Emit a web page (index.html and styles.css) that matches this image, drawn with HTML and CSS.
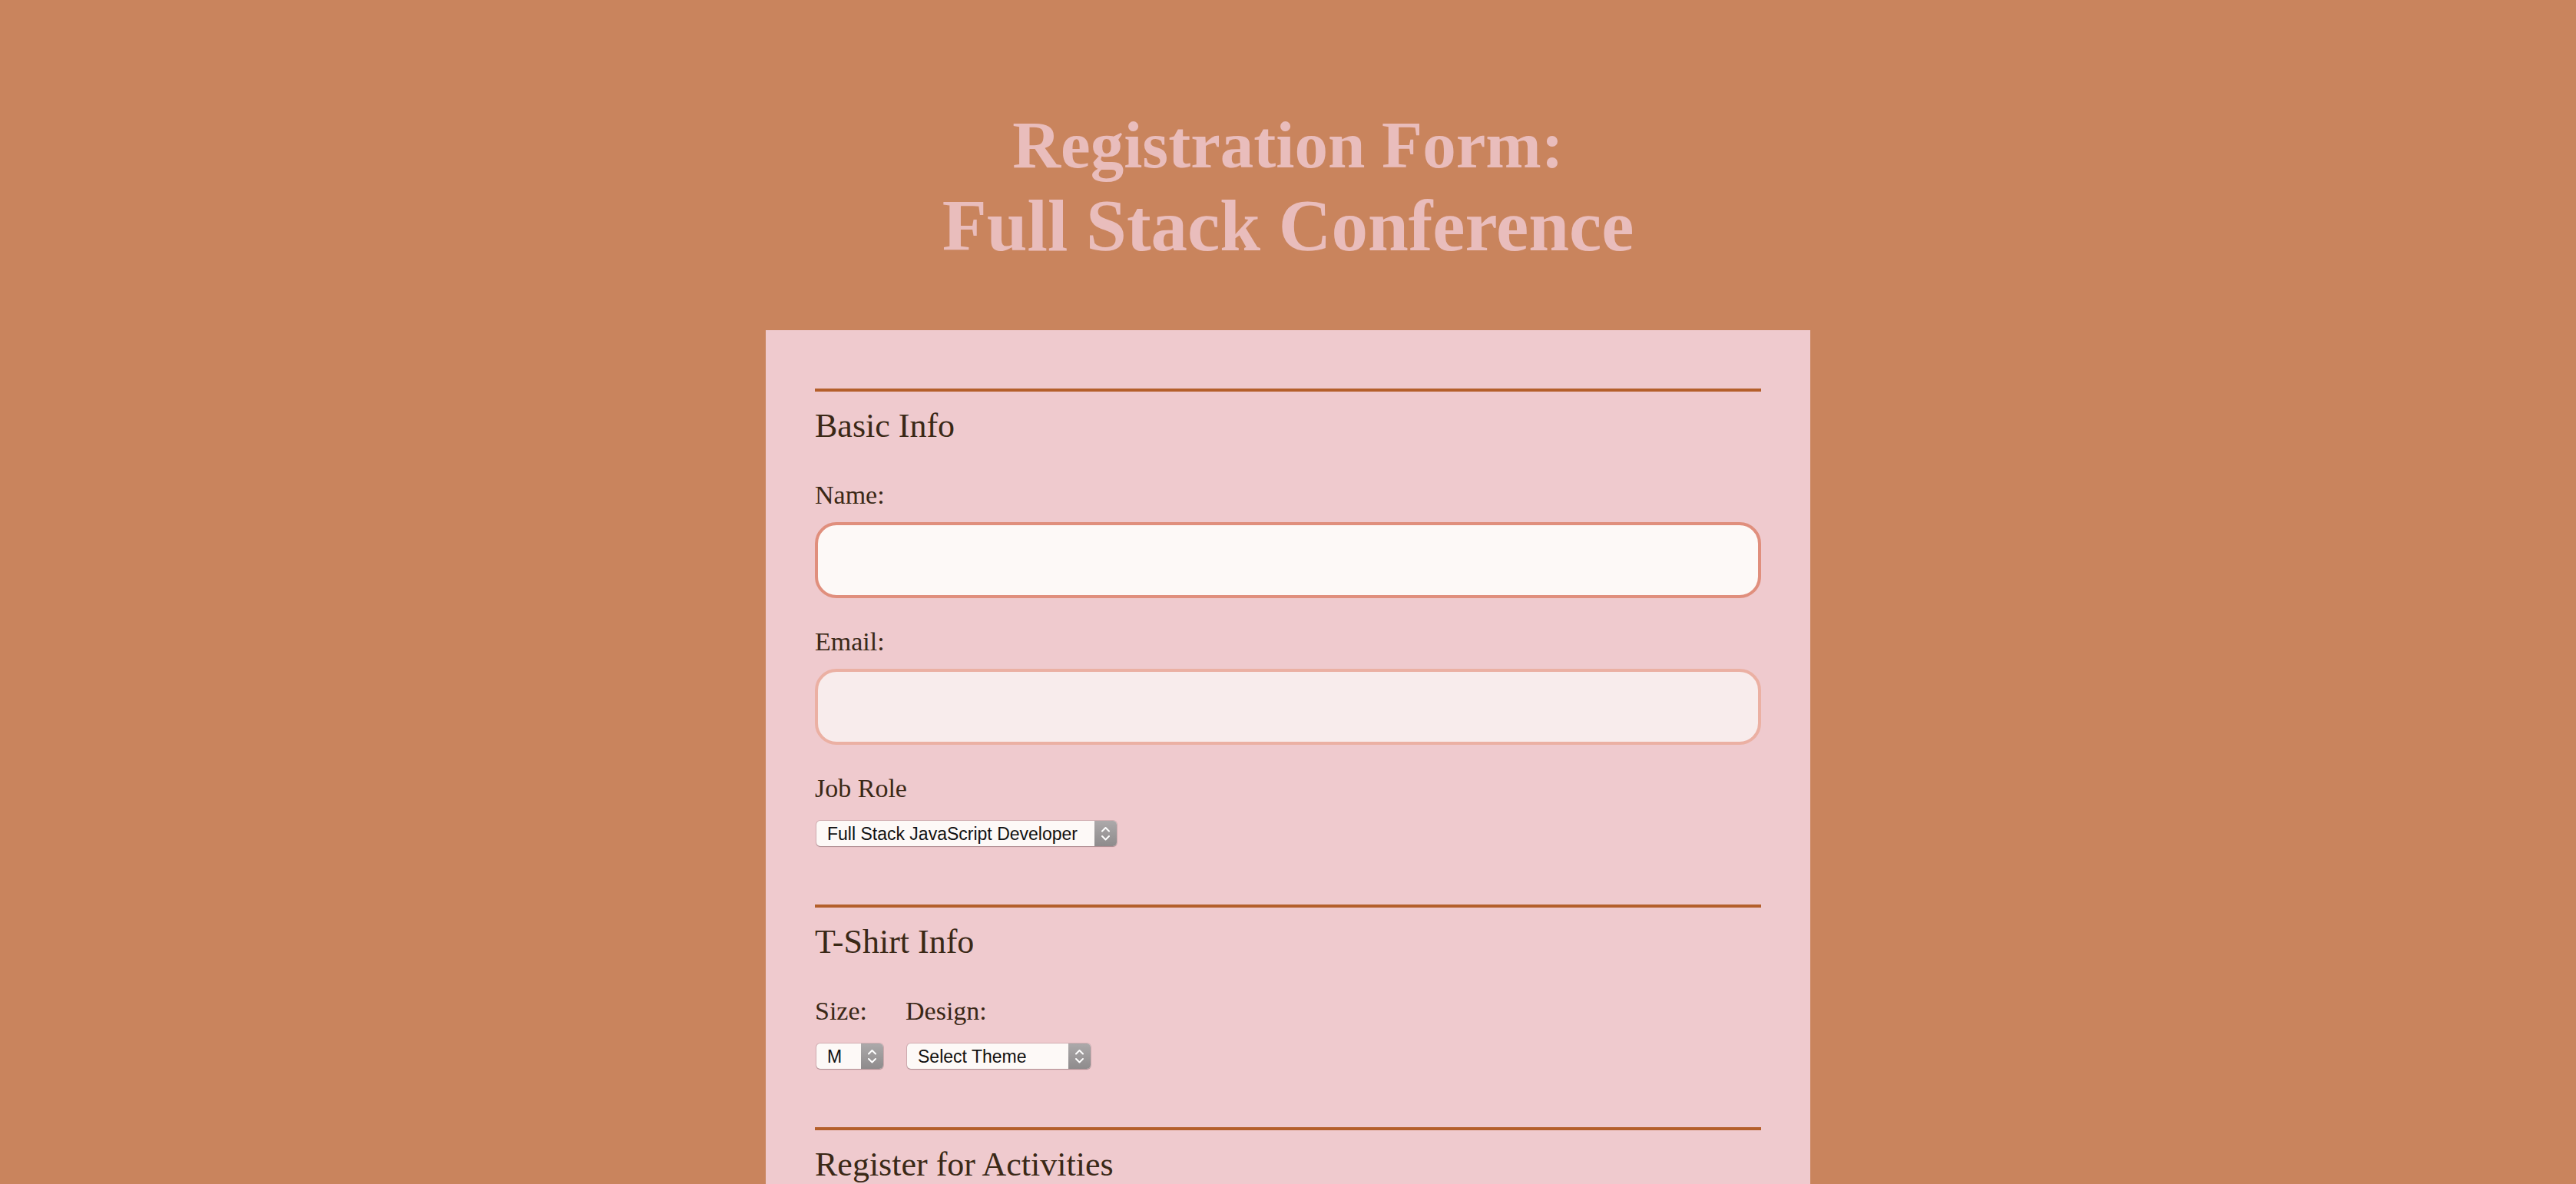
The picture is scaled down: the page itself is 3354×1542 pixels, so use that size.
FILE: index.html
```html
<!DOCTYPE html>
<html lang="en">
<head>
<meta charset="utf-8">
<title>Registration Form: Full Stack Conference</title>
<link rel="stylesheet" href="styles.css">
</head>
<body>
<header class="page-header">
  <h1 class="title">
    <span class="title-top">Registration Form:</span>
    <span class="title-main">Full Stack Conference</span>
  </h1>
</header>
<form class="card">
  <section class="section">
    <h2 class="section-title">Basic Info</h2>
    <label class="label" for="name">Name:</label>
    <input class="text-input is-focused" id="name" type="text">
    <label class="label" for="mail">Email:</label>
    <input class="text-input" id="mail" type="email">
    <label class="label label-select" for="title">Job Role</label>
    <div class="select-box">
      <select class="select select-job" id="title">
        <option>Full Stack JavaScript Developer</option>
        <option>Front End Developer</option>
        <option>Back End Developer</option>
        <option>Designer</option>
        <option>Student</option>
        <option>Other</option>
      </select>
      <span class="stepper"><svg width="29" height="33" viewBox="0 0 29 33"><path d="M10 13.5 L14.5 9 L19 13.5 M10 20 L14.5 24.5 L19 20" fill="none" stroke="#fff" stroke-width="2" stroke-linecap="round" stroke-linejoin="round"/></svg></span>
    </div>
  </section>
  <section class="section">
    <h2 class="section-title">T-Shirt Info</h2>
    <div class="shirt-row">
      <div class="shirt-col">
        <label class="label label-select" for="size">Size:</label>
        <div class="select-box">
          <select class="select select-size" id="size">
            <option>S</option>
            <option selected>M</option>
            <option>L</option>
            <option>XL</option>
          </select>
          <span class="stepper"><svg width="29" height="33" viewBox="0 0 29 33"><path d="M10 13.5 L14.5 9 L19 13.5 M10 20 L14.5 24.5 L19 20" fill="none" stroke="#fff" stroke-width="2" stroke-linecap="round" stroke-linejoin="round"/></svg></span>
        </div>
      </div>
      <div class="shirt-col">
        <label class="label label-select" for="design">Design:</label>
        <div class="select-box">
          <select class="select select-design" id="design">
            <option>Select Theme</option>
            <option>Theme - JS Puns</option>
            <option>Theme - I &#9829; JS</option>
          </select>
          <span class="stepper"><svg width="29" height="33" viewBox="0 0 29 33"><path d="M10 13.5 L14.5 9 L19 13.5 M10 20 L14.5 24.5 L19 20" fill="none" stroke="#fff" stroke-width="2" stroke-linecap="round" stroke-linejoin="round"/></svg></span>
        </div>
      </div>
    </div>
  </section>
  <section class="section">
    <h2 class="section-title">Register for Activities</h2>
  </section>
</form>
</body>
</html>
```
FILE: styles.css
```css
html, body {
  margin: 0;
  padding: 0;
}

body {
  background: #c9845d;
  font-family: "Liberation Serif", "DejaVu Serif", serif;
  color: #3a2816;
}

.page-header {
  padding-top: 137px;
  margin-bottom: 82px;
  text-align: center;
}

.title {
  margin: 0;
  color: #e9bdbc;
  font-weight: 700;
}

.title-top {
  display: block;
  font-size: 87px;
  line-height: 104px;
}

.title-main {
  display: block;
  font-size: 95px;
  line-height: 107px;
}

.card {
  box-sizing: border-box;
  width: 1360px;
  margin: 0 auto;
  padding: 76px 64px 120px;
  background: #efcace;
}

.section {
  border-top: 4px solid #b45f2b;
  padding-top: 19px;
  padding-bottom: 76px;
}

.section-title {
  margin: 0 0 44px;
  font-size: 44px;
  line-height: 52px;
  font-weight: 400;
  color: #3a2816;
}

.label {
  display: block;
  font-size: 34px;
  line-height: 40px;
  margin-bottom: 15px;
}

.label-select {
  margin-bottom: 22px;
}

.text-input {
  display: block;
  box-sizing: border-box;
  width: 100%;
  height: 99px;
  margin: 0 0 37px;
  padding: 0 24px;
  border: 4px solid #ebb0a3;
  border-radius: 28px;
  background: #f8ecec;
  font-family: "Liberation Serif", serif;
  font-size: 34px;
  color: #3a2816;
  outline: none;
}

.text-input.is-focused {
  border-color: #e08f7d;
  background: #fdf9f7;
}

.select-box {
  display: inline-flex;
  height: 33px;
  margin-left: 2px;
  border-radius: 5px;
  overflow: hidden;
  background: #fdf9f7;
  box-shadow: 0 0 0 1px rgba(120, 90, 95, 0.25), 0 1px 1px rgba(80, 50, 55, 0.3);
  vertical-align: top;
}

.select {
  -webkit-appearance: none;
  appearance: none;
  box-sizing: border-box;
  height: 33px;
  margin: 0;
  padding: 0 0 0 14px;
  border: none;
  background: transparent;
  font-family: "Liberation Sans", Arial, sans-serif;
  font-size: 23px;
  color: #111;
  outline: none;
}

.select-job {
  width: 362px;
}

.select-size {
  width: 58px;
}

.select-design {
  width: 210px;
}

.stepper {
  display: flex;
  width: 29px;
  height: 33px;
  background: linear-gradient(#aca9aa, #8e8b8c);
}

.shirt-row {
  display: flex;
  gap: 29px;
}

.shirt-col {
  display: flex;
  flex-direction: column;
  align-items: flex-start;
}
```
